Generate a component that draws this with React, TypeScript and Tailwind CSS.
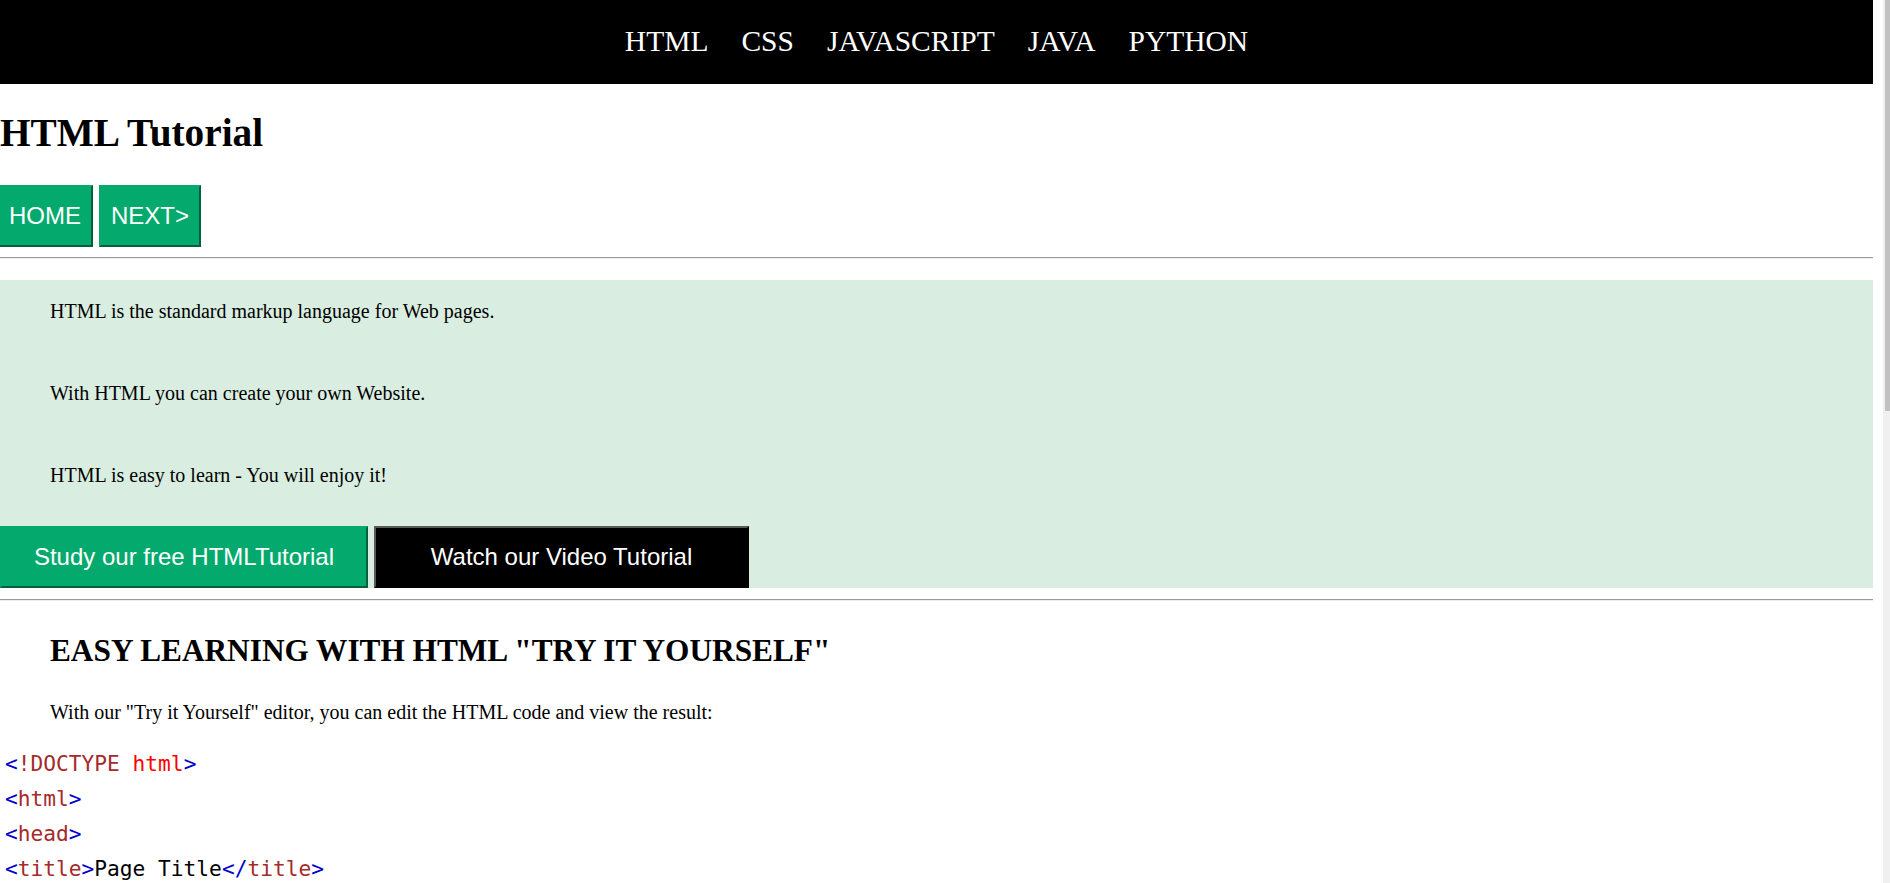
import React from "react";

const navLinks = ["HTML", "CSS", "JAVASCRIPT", "JAVA", "PYTHON"];

const serif = { fontFamily: '"Liberation Serif", "Times New Roman", serif' };

function Tag({ name, close }: { name: string; close?: boolean }) {
  return (
    <>
      <span className="text-[#0000cd]">{close ? "</" : "<"}</span>
      <span className="text-[#a52a2a]">{name}</span>
      <span className="text-[#0000cd]">&gt;</span>
    </>
  );
}

function CodeBlock() {
  return (
    <div
      className="pl-[5px] text-[21.2px] leading-[35px] text-black"
      style={{ fontFamily: '"DejaVu Sans Mono", "Liberation Mono", monospace' }}
    >
      <div>
        <span className="text-[#0000cd]">&lt;</span>
        <span className="text-[#a52a2a]">!DOCTYPE</span>{" "}
        <span className="text-[#ff0000]">html</span>
        <span className="text-[#0000cd]">&gt;</span>
      </div>
      <div>
        <Tag name="html" />
      </div>
      <div>
        <Tag name="head" />
      </div>
      <div>
        <Tag name="title" />
        Page Title
        <Tag name="title" close />
      </div>
      <div>
        <Tag name="head" close />
      </div>
      <div>
        <Tag name="body" />
      </div>
    </div>
  );
}

export default function App() {
  const btnFont = { fontFamily: '"Liberation Sans", Arial, sans-serif' };

  return (
    <div className="flex h-[883px] w-[1890px] overflow-hidden bg-white">
      <div className="flex w-[1873px] shrink-0 flex-col" style={serif}>
        {/* top nav */}
        <nav className="flex h-[84px] shrink-0 items-start justify-center gap-[33px] bg-black pt-[25px]">
          {navLinks.map((link) => (
            <a key={link} href="#" className="text-[29.5px] leading-[33px] text-white">
              {link}
            </a>
          ))}
        </nav>

        <h1 className="mt-[27px] text-[39.3px] font-bold leading-[45px] text-black">
          HTML Tutorial
        </h1>

        <div className="-ml-[3px] mt-[29px] flex gap-[6px]" style={btnFont}>
          <button className="border-2 border-[#04aa6d] border-r-[#05603e] border-b-[#05603e] bg-[#04aa6d] px-[10px] py-[15px] text-[24px] leading-[28px] text-white">
            HOME
          </button>
          <button className="border-2 border-[#04aa6d] border-r-[#05603e] border-b-[#05603e] bg-[#04aa6d] px-[10px] py-[15px] text-[24px] leading-[28px] text-white">
            NEXT&gt;
          </button>
        </div>

        <hr className="mt-[10px] border-0 border-t border-b border-t-[#9a9a9a] border-b-[#eeeeee]" />

        {/* intro band */}
        <section className="mt-[21px] flex flex-col bg-[#d9eee1] pt-[20px]">
          <div className="flex flex-col gap-[59px] pl-[50px] text-[20px] leading-[23px] text-black">
            <p>HTML is the standard markup language for Web pages.</p>
            <p>With HTML you can create your own Website.</p>
            <p>HTML is easy to learn - You will enjoy it!</p>
          </div>
          <div className="mt-[39px] flex gap-[6px]" style={btnFont}>
            <button className="w-[368px] border-2 border-[#04aa6d] border-r-[#05603e] border-b-[#05603e] bg-[#04aa6d] py-[15px] text-[24px] leading-[28px] text-white">
              Study our free HTMLTutorial
            </button>
            <button className="w-[375px] border-2 border-black border-t-[#5a5a5a] border-l-[#5a5a5a] bg-black py-[15px] text-[24px] leading-[28px] text-white">
              Watch our Video Tutorial
            </button>
          </div>
        </section>

        <hr className="mt-[11px] border-0 border-t border-b border-t-[#9a9a9a] border-b-[#eeeeee]" />

        <h2 className="mt-[32px] pl-[50px] text-[31.3px] font-bold leading-[36px] text-black">
          EASY LEARNING WITH HTML "TRY IT YOURSELF"
        </h2>
        <p className="mt-[32px] pl-[50px] text-[20px] leading-[23px] text-black">
          With our "Try it Yourself" editor, you can edit the HTML code and view the result:
        </p>

        <div className="mt-[22px]">
          <CodeBlock />
        </div>
      </div>

      {/* browser scrollbar */}
      <div className="ml-[10px] flex w-[7px] shrink-0 bg-[#f0f0f0] pl-[2px]">
        <div className="h-[411px] w-full bg-[#c1c1c1]" />
      </div>
    </div>
  );
}
